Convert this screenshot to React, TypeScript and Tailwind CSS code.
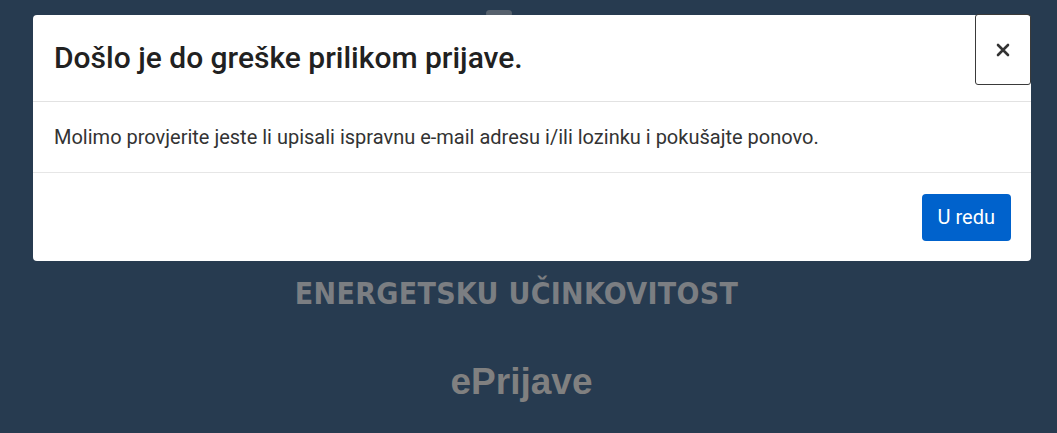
export default function App() {
  return (
    <div className="relative h-[433px] w-full overflow-hidden bg-[#273b50] font-['Roboto',sans-serif]">
      <div className="flex flex-col items-center pt-[10px] pr-[14px]">
        <div className="ml-[-46px] h-[7px] w-[26px] rounded-full bg-[#56616d]" />
        <div className="mt-[259px] mr-[10px] font-['DejaVu_Sans_Condensed','Liberation_Sans_Narrow',sans-serif] text-[30px] font-bold leading-[36px] tracking-[0.3px] text-[#7b7e82]">
          ENERGETSKU UČINKOVITOST
        </div>
        <div className="mt-[49px] font-['Liberation_Sans',sans-serif] text-[37px] font-bold leading-[42px] text-[#808080]">ePrijave</div>
      </div>

      <div className="absolute left-[33px] top-[15px] w-[998px] rounded-[4px] bg-white">
        <div className="flex h-[87px] items-center justify-between border-b border-[#e2e2e2] pl-[21px]">
          <h2 className="text-[30px] font-medium leading-[36px] text-[#212121]">Došlo je do greške prilikom prijave.</h2>
          <button className="-mt-[1px] flex h-[71px] w-[56px] items-center justify-center self-start rounded-[3px] border border-[#3a3a3a] text-[#333]">
            <svg width="14" height="14" viewBox="0 0 14 14">
              <path d="M2 2L12 12M12 2L2 12" stroke="#333" strokeWidth="2.6" strokeLinecap="round" />
            </svg>
          </button>
        </div>
        <div className="flex h-[71px] items-center border-b border-[#e6e6e6] pl-[21px] text-[20px] text-[#333]">
          Molimo provjerite jeste li upisali ispravnu e-mail adresu i/ili lozinku i pokušajte ponovo.
        </div>
        <div className="flex h-[88px] items-center justify-end pr-[20px]">
          <button className="h-[47px] rounded-[4px] bg-[#0062cc] px-[16px] text-[20px] text-white">U redu</button>
        </div>
      </div>
    </div>
  );
}
